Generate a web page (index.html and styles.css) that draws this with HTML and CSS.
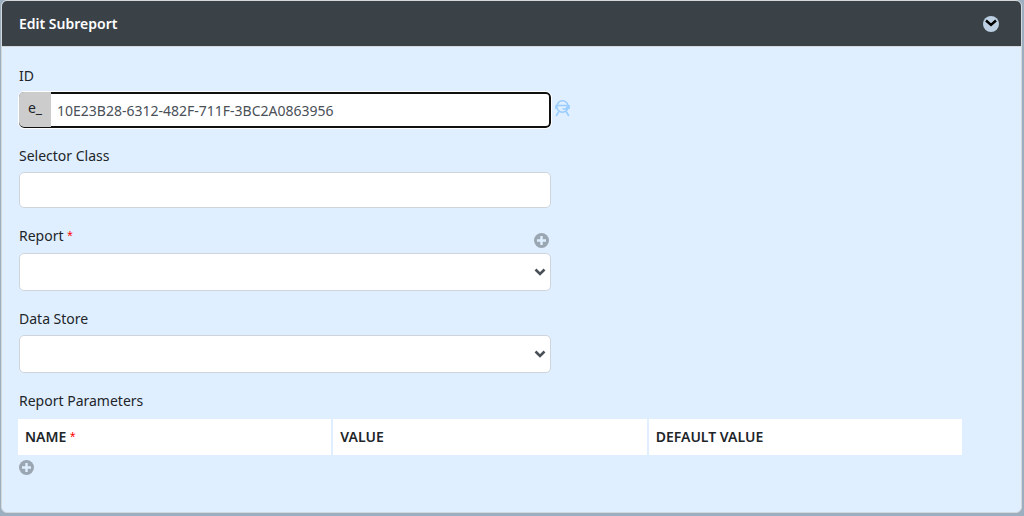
FILE: index.html
```html
<!DOCTYPE html>
<html lang="en">

<head>
    <meta charset="UTF-8">
    <meta name="viewport" content="width=device-width, initial-scale=1">
    <title>Edit Subreport</title>

    <link rel="stylesheet" href="styles.css">

</head>

<body>

    <main class="panel">
        <header class="panel-header">
            <h1>Edit Subreport</h1>
            <button type="button" class="icon-button" aria-label="Collapse">
                <svg width="16" height="16" viewBox="0 0 16 16">
                    <circle cx="8" cy="8" r="8" fill="#bdd0e3" />
                    <path d="M3 4.5L8 9L13 4.5" fill="none" stroke="#000" stroke-width="2.4" />
                </svg>
            </button>
        </header>

        <form class="panel-body">
            <div class="field">
                <label class="label" for="id">ID</label>
                <div class="id-row">
                    <div class="input-group">
                        <span class="prefix">e_</span>
                        <input type="text" id="id" class="control focused" value="10E23B28-6312-482F-711F-3BC2A0863956">
                    </div>
                    <button type="button" class="icon-button" aria-label="Generate ID">
                        <svg width="15" height="18" viewBox="0 0 15 18" fill="none" stroke="#99ccff" stroke-width="1.6">
                            <circle cx="7.5" cy="7.5" r="5.7" />
                            <path d="M1 6v4M14 6v4M2.5 6.5h10M12.5 7.5L11 10H7.5M3.8 12.5L1.2 17M11.2 12.5l2.6 4.5" />
                        </svg>
                    </button>
                </div>
            </div>

            <div class="field">
                <label class="label" for="selector">Selector Class</label>
                <input type="text" id="selector" class="control">
            </div>

            <div class="field">
                <div class="label-row">
                    <label class="label" for="report">Report <span class="required">*</span></label>
                    <button type="button" class="icon-button" aria-label="Add report">
                        <svg width="15" height="15" viewBox="0 0 15 15">
                            <circle cx="7.5" cy="7.5" r="7.5" fill="#9aa6b2" />
                            <path d="M7.5 3v9M3 7.5h9" stroke="#e0efff" stroke-width="2.4" />
                        </svg>
                    </button>
                </div>
                <div class="select">
                    <select id="report" class="control" required>
                        <option></option>
                    </select>
                    <svg class="arrow" width="12" height="9" viewBox="0 0 12 9">
                        <path d="M1.5 1.5L6 6L10.5 1.5" fill="none" stroke="#495057" stroke-width="2.6" />
                    </svg>
                </div>
            </div>

            <div class="field">
                <label class="label" for="store">Data Store</label>
                <div class="select">
                    <select id="store" class="control">
                        <option></option>
                    </select>
                    <svg class="arrow" width="12" height="9" viewBox="0 0 12 9">
                        <path d="M1.5 1.5L6 6L10.5 1.5" fill="none" stroke="#495057" stroke-width="2.6" />
                    </svg>
                </div>
            </div>

            <div class="parameters">
                <div class="label" id="parameters">Report Parameters</div>
                <table aria-labelledby="parameters">
                    <thead>
                        <tr>
                            <th>NAME <span class="required">*</span></th>
                            <th>VALUE</th>
                            <th>DEFAULT VALUE</th>
                        </tr>
                    </thead>
                </table>
                <button type="button" class="icon-button" aria-label="Add parameter">
                    <svg width="15" height="15" viewBox="0 0 15 15">
                        <circle cx="7.5" cy="7.5" r="7.5" fill="#9aa6b2" />
                        <path d="M7.5 3v9M3 7.5h9" stroke="#e0efff" stroke-width="2.4" />
                    </svg>
                </button>
            </div>
        </form>
    </main>

</body>

</html>
```

FILE: styles.css
```css
* {
    box-sizing: border-box;
}

body {
    margin: 0;
    padding: 0 2px 2px 1px;
    background: #9bafc0;
    color: #212529;
    font-family: "Noto Sans", "Open Sans", sans-serif;
    font-size: 14px;
    line-height: 24px;
}

.panel {
    border: 1px solid #d5d8da;
    border-radius: 6px;
    background: #e0efff;
    overflow: hidden;
}

.panel-header {
    display: flex;
    align-items: center;
    justify-content: space-between;
    padding: 11px 22px 10px 17px;
    background: #3a4248;
    border-bottom: 1px solid #d5d8da;
}

h1 {
    margin: 0;
    color: #fff;
    font-size: 14px;
    font-weight: 600;
}

.icon-button {
    display: block;
    padding: 0;
    border: 0;
    background: none;
    cursor: pointer;
}

.icon-button svg {
    display: block;
}

.panel-body {
    display: flex;
    flex-direction: column;
    gap: 16px;
    padding: 17px 17px 37px;
}

.field {
    width: 54%;
}

.label {
    display: block;
    margin-bottom: 4px;
}

.label-row {
    display: flex;
    align-items: flex-end;
    justify-content: space-between;
    margin-bottom: 5px;
    padding-right: 2px;
}

.label-row .label {
    margin-bottom: 0;
}

.required {
    color: #f00;
    font-family: "Liberation Sans", sans-serif;
    font-weight: 400;
}

.control {
    display: block;
    width: 100%;
    height: 36px;
    padding: 0 6px;
    border: 1px solid #ced4da;
    border-radius: 5px;
    background: #fff;
    color: #495057;
    font: inherit;
}

.focused {
    padding-left: 36px;
    border: 2px solid #101010;
    outline: 1px solid #fff;
}

.id-row {
    display: flex;
    align-items: flex-start;
    gap: 4px;
    margin-right: -19px;
}

.id-row .icon-button {
    margin-top: 7px;
}

.input-group {
    position: relative;
    flex: 1;
}

.prefix {
    position: absolute;
    top: 0;
    bottom: 1px;
    left: 0;
    width: 32px;
    padding-top: 4px;
    border-radius: 5px 0 0 5px;
    background: #ccc;
    text-align: center;
}

.select {
    position: relative;
}

.select .control {
    height: 38px;
    appearance: none;
}

.arrow {
    position: absolute;
    top: 15px;
    right: 5px;
    pointer-events: none;
}

.parameters .label {
    margin-bottom: 6px;
}

table {
    width: calc(100% - 37px);
    margin: 0 0 5px -3px;
    border-spacing: 2px 0;
    table-layout: fixed;
}

th {
    padding: 6px 7px;
    background: #fff;
    font-weight: 600;
    text-align: left;
}
```
